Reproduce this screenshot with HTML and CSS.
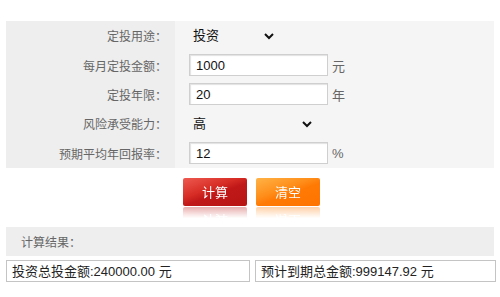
FILE: index.html
```html
<!DOCTYPE html>
<html lang="zh-CN">
<head>
  <meta charset="UTF-8">
  <title>基金定投计算器</title>
  <link rel="stylesheet" href="styles.css">
</head>
<body>
  <div class="calc">
    <div class="form-table">
      <div class="row">
        <div class="label">定投用途：</div>
        <div class="field">
          <select class="sel sel-short">
            <option>投资</option>
            <option>养老</option>
            <option>教育</option>
          </select>
        </div>
      </div>
      <div class="row">
        <div class="label">每月定投金额：</div>
        <div class="field">
          <input type="text" class="txt" value="1000">
          <span class="unit">元</span>
        </div>
      </div>
      <div class="row">
        <div class="label">定投年限：</div>
        <div class="field">
          <input type="text" class="txt" value="20">
          <span class="unit">年</span>
        </div>
      </div>
      <div class="row">
        <div class="label">风险承受能力：</div>
        <div class="field">
          <select class="sel sel-long">
            <option>高</option>
            <option>中</option>
            <option>低</option>
          </select>
        </div>
      </div>
      <div class="row">
        <div class="label">预期平均年回报率：</div>
        <div class="field">
          <input type="text" class="txt" value="12">
          <span class="unit">%</span>
        </div>
      </div>
    </div>

    <div class="buttons">
      <button class="btn btn-red">计算</button>
      <button class="btn btn-orange">清空</button>
    </div>

    <div class="result-title">计算结果：</div>
    <div class="result-boxes">
      <div class="result-box">投资总投金额:240000.00 元</div>
      <div class="result-box">预计到期总金额:999147.92 元</div>
    </div>
  </div>
</body>
</html>
```

FILE: styles.css
```css
body {
  margin: 0;
  font-family: Arial, "Liberation Sans", "Noto Sans CJK SC", sans-serif;
  font-size: 13px;
  color: #333;
  background: #fff;
}

.calc {
  padding: 21px 4px 0 6px;
}

.form-table {
  width: 488px;
  background: #f5f5f5;
}

.row {
  display: grid;
  grid-template-columns: 169px 1fr;
  height: 29.4px;
}

.label {
  background: #eeeeee;
  color: #666;
  font-size: 12px;
  padding-right: 8px;
  display: flex;
  align-items: center;
  justify-content: flex-end;
}

.field {
  display: flex;
  align-items: center;
  padding-left: 14px;
}

.txt {
  width: 139px;
  height: 22px;
  box-sizing: border-box;
  border: 1px solid #cfcfcf;
  box-shadow: inset 1px 1px 1px #e2e2e2;
  padding: 0 6px;
  font-family: Arial, "Liberation Sans", sans-serif;
  font-size: 13px;
  color: #111;
  background: #fff;
}

.unit {
  margin-left: 4px;
  color: #666;
  font-size: 13px;
}

.sel {
  height: 22px;
  border: none;
  background: transparent;
  font-family: Arial, "Liberation Sans", "Noto Sans CJK SC", sans-serif;
  font-size: 13px;
  color: #111;
  padding-left: 0;
  margin-left: 0;
}

.sel-short {
  width: 88px;
}

.sel-long {
  width: 126px;
}

.buttons {
  display: flex;
  gap: 9px;
  padding-left: 177px;
  margin-top: 10px;
  height: 49px;
}

.btn {
  width: 64px;
  height: 28px;
  border: none;
  border-radius: 2px;
  color: #fff;
  font-family: "Noto Sans CJK SC", sans-serif;
  font-size: 13px;
  cursor: pointer;
  -webkit-box-reflect: below 1px linear-gradient(transparent 60%, rgba(0,0,0,0.35));
}

.btn-red {
  background: linear-gradient(160deg, #ee5a50 0%, #d62c25 40%, #c01818 55%, #b81515 100%);
}

.btn-orange {
  background: linear-gradient(160deg, #ffb347 0%, #ff8e1a 40%, #ff7a05 55%, #ff7300 100%);
}

.result-title {
  width: 473px;
  height: 29px;
  background: #eeeeee;
  color: #666;
  font-size: 12px;
  padding-left: 15px;
  display: flex;
  align-items: center;
}

.result-boxes {
  display: flex;
  gap: 5px;
  margin-top: 4px;
}

.result-box {
  width: 244px;
  height: 22px;
  box-sizing: border-box;
  border: 1px solid #c4c4c4;
  padding-left: 5px;
  display: flex;
  align-items: center;
  color: #222;
  font-size: 13px;
}

.result-box + .result-box {
  width: 241px;
}
```
